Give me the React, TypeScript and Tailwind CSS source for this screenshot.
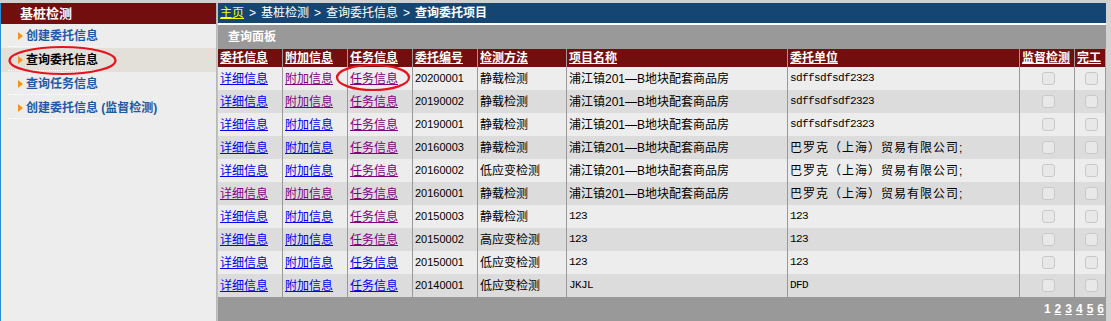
import React from "react";

type Row = { no: string; method: string; project: string; unit: string; visited: [boolean, boolean, boolean] };

const rows: Row[] = [
  { no: "20200001", method: "静载检测", project: "浦江镇201—B地块配套商品房", unit: "sdffsdfsdf2323", visited: [false, true, true] },
  { no: "20190002", method: "静载检测", project: "浦江镇201—B地块配套商品房", unit: "sdffsdfsdf2323", visited: [false, true, true] },
  { no: "20190001", method: "静载检测", project: "浦江镇201—B地块配套商品房", unit: "sdffsdfsdf2323", visited: [false, false, true] },
  { no: "20160003", method: "静载检测", project: "浦江镇201—B地块配套商品房", unit: "巴罗克（上海）贸易有限公司;", visited: [false, false, true] },
  { no: "20160002", method: "低应变检测", project: "浦江镇201—B地块配套商品房", unit: "巴罗克（上海）贸易有限公司;", visited: [false, false, true] },
  { no: "20160001", method: "静载检测", project: "浦江镇201—B地块配套商品房", unit: "巴罗克（上海）贸易有限公司;", visited: [true, true, true] },
  { no: "20150003", method: "静载检测", project: "123", unit: "123", visited: [false, false, true] },
  { no: "20150002", method: "高应变检测", project: "123", unit: "123", visited: [false, false, true] },
  { no: "20150001", method: "低应变检测", project: "123", unit: "123", visited: [false, false, false] },
  { no: "20140001", method: "低应变检测", project: "JKJL", unit: "DFD", visited: [false, false, false] },
];

const headers = ["委托信息", "附加信息", "任务信息", "委托编号", "检测方法", "项目名称", "委托单位", "监督检测", "完工"];
const linkText = ["详细信息", "附加信息", "任务信息"];
const cols = "grid grid-cols-[65px_65px_65px_65px_89px_221px_232px_55px_31px]";

const menu = [
  { label: "创建委托信息", active: false },
  { label: "查询委托信息", active: true },
  { label: "查询任务信息", active: false },
  { label: "创建委托信息 (监督检测)", active: false },
];

const isAscii = (s: string) => /^[\x00-\x7f]+$/.test(s);

const Cell = ({ children, className = "" }: { children?: React.ReactNode; className?: string }) => (
  <div className={`flex items-center border-r border-[#999999] pl-[2px] whitespace-nowrap overflow-hidden ${className}`}>{children}</div>
);

const Check = () => (
  <div className="w-[13px] h-[13px] rounded-[3px] border border-[#c9c9c9] bg-[#e8e8e8]" />
);

const App = () => {
  return (
    <div className="relative w-[1111px] h-[321px] overflow-hidden flex flex-col bg-[#d3d3d3] font-['Liberation_Sans','Noto_Sans_CJK_SC',sans-serif]">
      <div className="h-[3px] bg-[#d0d0d0]" />
      <div className="flex flex-1">
        {/* sidebar */}
        <div className="w-[217px] flex flex-col bg-[#ededed] border-l border-l-[#2b8ccf] border-r border-r-[#b8b8b8]">
          <div className="h-[21px] bg-[#720e0e] flex items-center pl-[19px] text-white font-bold text-[13px]">基桩检测</div>
          {menu.map((m) => (
            <div key={m.label} className={`relative h-[24px] flex items-center pl-[17px] ${m.active ? "bg-[#e3e0da]" : ""}`}>
              <span className="w-0 h-0 border-y-[4px] border-y-transparent border-l-[5px] border-l-[#f7931e] mr-[3px]" />
              <span className={`text-[12px] font-bold ${m.active ? "text-black" : "text-[#1d5aa6]"}`}>{m.label}</span>
              <div className="absolute left-[7px] bottom-[1px] w-[90px] border-b border-dotted border-white" />
            </div>
          ))}
        </div>

        {/* main */}
        <div className="w-[889px] flex flex-col border-l border-[#c2c2c2] bg-[#999999]">
          <div className="h-[22px] bg-[#154673] border-b-2 border-white flex items-center pl-[2px] text-[12px] text-white gap-[5px]">
            <span className="text-[#ffff00] underline">主页</span>
            <span>&gt;</span>
            <span>基桩检测</span>
            <span>&gt;</span>
            <span>查询委托信息</span>
            <span>&gt;</span>
            <span className="font-bold">查询委托项目</span>
          </div>
          <div className="h-[24px] flex items-center pl-[10px] text-white font-bold text-[12px]">查询面板</div>
          <div className={`${cols} h-[18px] bg-[#720e0e] text-white font-bold text-[12px]`}>
            {headers.map((h) => (
              <Cell key={h}>
                <span className="underline">{h}</span>
              </Cell>
            ))}
          </div>
          {rows.map((r, i) => (
            <div key={r.no} className={`${cols} h-[23px] text-[12px] text-black ${i % 2 === 0 ? "bg-[#ededed]" : "bg-[#dcdcdc]"}`}>
              {linkText.map((t, k) => (
                <Cell key={t}>
                  <span className={`underline ${r.visited[k] ? "text-[#800080]" : "text-[#0000ee]"}`}>{t}</span>
                </Cell>
              ))}
              <Cell className="text-[11px]">{r.no}</Cell>
              <Cell>{r.method}</Cell>
              <Cell className={isAscii(r.project) ? "font-['Liberation_Mono',monospace] text-[11px] tracking-[-0.6px]" : ""}>{r.project}</Cell>
              <Cell className={isAscii(r.unit) ? "font-['Liberation_Mono',monospace] text-[11px] tracking-[-0.6px]" : "tracking-[1px]"}>{r.unit}</Cell>
              <Cell className="justify-center pl-0"><Check /></Cell>
              <Cell className="justify-center pl-0"><Check /></Cell>
            </div>
          ))}
          <div className="flex-1 flex items-center justify-end pr-[2px] gap-[4px] text-white font-bold text-[12px]">
            <span>1</span>
            {["2", "3", "4", "5", "6"].map((n) => (
              <span key={n} className="underline">{n}</span>
            ))}
          </div>
        </div>
      </div>

      {/* red annotation marks */}
      <svg className="absolute left-0 top-0 pointer-events-none" width="1111" height="321">
        <ellipse cx="62.5" cy="60.5" rx="53" ry="13.5" fill="none" stroke="#e3141d" strokeWidth="2.2" />
        <ellipse cx="373" cy="77.5" rx="36" ry="12.5" fill="none" stroke="#e3141d" strokeWidth="2.2" />
      </svg>
    </div>
  );
};

export default App;
